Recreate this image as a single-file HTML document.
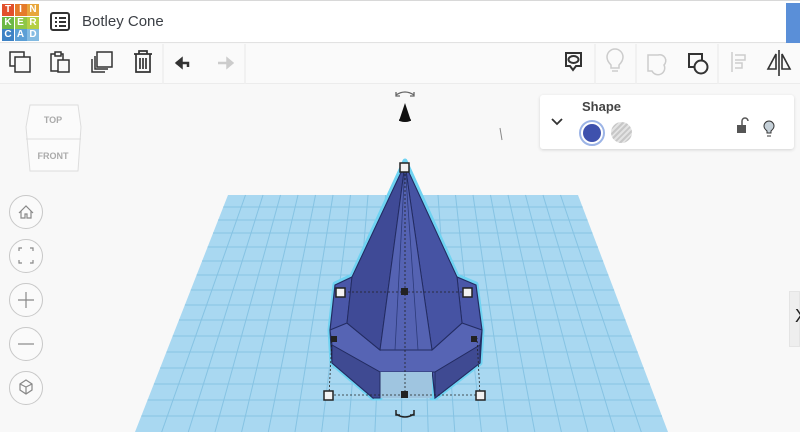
<!DOCTYPE html>
<html><head><meta charset="utf-8"><style>
*{margin:0;padding:0;box-sizing:border-box}
body{width:800px;height:432px;overflow:hidden;background:#f8f8f8;font-family:"Liberation Sans",sans-serif;position:relative}
.hdr{position:absolute;left:0;top:0;width:800px;height:43px;background:#fff;border-bottom:1px solid #e2e2e2;border-top:1px solid #d8d8d8}
.tb{position:absolute;left:0;top:44px;width:800px;height:40px;background:#fafafa;border-bottom:1px solid #ececec}
.logo{position:absolute;left:2px;top:3px;width:37px;height:37px;display:grid;grid-template-columns:repeat(3,12px);grid-gap:0.5px}
.logo span{color:#fff;font-size:10px;font-weight:bold;text-align:center;line-height:12px}
.title{position:absolute;left:82px;top:12px;font-size:15px;color:#3b3f45}
.panel{position:absolute;left:540px;top:95px;width:254px;height:54px;background:#fff;border-radius:3px;box-shadow:0 1px 3px rgba(0,0,0,.15)}
.circ{position:absolute;left:9px;width:34px;height:34px;border:1px solid #c8c8c8;border-radius:50%;background:#fafafa}
</style></head><body>
<div class="hdr">
<div class="logo">
<span style="background:#e2502b">T</span><span style="background:#e57b2a">I</span><span style="background:#e8a63b">N</span>
<span style="background:#6cb845">K</span><span style="background:#8fc746">E</span><span style="background:#b5cf45">R</span>
<span style="background:#3d82c5">C</span><span style="background:#5b9fd6">A</span><span style="background:#83bbe2">D</span>
</div>
<svg style="position:absolute;left:50px;top:11px" width="20" height="20" viewBox="0 0 20 20"><rect x="1" y="1" width="18" height="17" rx="2" fill="none" stroke="#333" stroke-width="2"/><path d="M5 6h2M9 6h7M5 10h2M9 10h7M5 14h2M9 14h7" stroke="#333" stroke-width="2"/></svg>
<div class="title">Botley Cone</div>
<div style="position:absolute;left:786px;top:2px;width:14px;height:40px;background:#5a8fd8"></div>
</div>
<div class="tb">
<svg width="800" height="40" style="position:absolute;left:0;top:0" fill="none" stroke="#333" stroke-width="1.5">
<rect x="10" y="8" width="14" height="14"/><rect x="15" y="13" width="15" height="15" fill="#fafafa"/>
<rect x="51" y="10" width="12" height="17"/><rect x="55" y="8" width="6" height="4" fill="#fafafa"/><rect x="58" y="16" width="11" height="12" fill="#fafafa"/>
<rect x="97" y="8" width="15" height="15"/><path d="M95 12v13h13M92 15v13h13"/>
<path d="M134 10h18M139 10v-3h8v3M136 10v18h14V10M140 14v11M143 14v11M146 14v11" stroke-width="1.7"/>
<path d="M176 19h12v4" stroke-width="2.5"/><path d="M176 19l6-5v10z" fill="#333"/>
<path d="M230 19h-12" stroke="#ccc" stroke-width="2.5"/><path d="M233 19l-6-5v10z" fill="#ccc" stroke="#ccc"/>
<line x1="163" y1="0" x2="163" y2="40" stroke="#eee"/><line x1="245" y1="0" x2="245" y2="40" stroke="#eee"/>
<path d="M566 9h15v13h-5l-3 4-3-4h-4z" stroke-width="2"/><ellipse cx="573.5" cy="15.5" rx="5" ry="3.5" stroke-width="2"/>
<path d="M611 21c-3-3-4-5-4-8a8 8 0 0 1 16 0c0 3-1 5-4 8v3h-8z M612 27h6" stroke="#ccc"/>
<path d="M648 11h10a6 6 0 0 1 6 10 6 6 0 0 1-12 6h-4z" stroke="#ccc"/>
<rect x="689" y="10" width="13" height="13" stroke-width="2"/><circle cx="701" cy="23" r="6.5" fill="#fafafa" stroke-width="2"/>
<path d="M732 8v20M735 11h10v5h-10M735 19h7v5h-7" stroke="#ccc"/>
<path d="M779 6v26M776 10l-8 15h8zM782 10l8 15h-8z" stroke-width="1.6"/>
<line x1="595" y1="0" x2="595" y2="40" stroke="#eee"/><line x1="636" y1="0" x2="636" y2="40" stroke="#eee"/><line x1="718" y1="0" x2="718" y2="40" stroke="#eee"/>
</svg>
</div>
<svg style="position:absolute;left:24px;top:103px" width="60" height="70"><path d="M6 2h48l3 22-3 44H6L2 24z" fill="#fbfbfb" stroke="#ddd"/><path d="M2 36h55" stroke="#ddd"/><text x="29" y="20" font-size="9" font-weight="bold" fill="#aaa" text-anchor="middle" font-family="Liberation Sans">TOP</text><text x="29" y="56" font-size="9" font-weight="bold" fill="#aaa" text-anchor="middle" font-family="Liberation Sans">FRONT</text></svg>
<div class="circ" style="top:195px"></div><div class="circ" style="top:239px"></div><div class="circ" style="top:283px"></div><div class="circ" style="top:327px"></div><div class="circ" style="top:371px"></div>
<svg style="position:absolute;left:0;top:0" width="60" height="432" fill="none" stroke="#888" stroke-width="1.2">
<path d="M19 213l7-7 7 7M21 211v7h4v-4h2v4h4v-7"/>
<path d="M19 251v-3h3M33 251v-3h-3M19 260v3h3M33 260v3h-3"/>
<path d="M26 292v16M18 300h16"/><path d="M18 344h16"/>
<path d="M26 380l6 4v6l-6 4-6-4v-6zM20 384l6 3 6-3M26 387v7"/>
</svg>
<svg style="position:absolute;left:0;top:0" width="800" height="432">
<polygon points="228,195 578,195 668,432 135,432" fill="#a9d8f1"/>
<g stroke="#86c3e3" stroke-width="1">
<line x1="245.5" y1="195" x2="161.7" y2="432"/><line x1="263" y1="195" x2="188.3" y2="432"/><line x1="280.5" y1="195" x2="215" y2="432"/><line x1="298" y1="195" x2="241.6" y2="432"/><line x1="315.5" y1="195" x2="268.3" y2="432"/><line x1="333" y1="195" x2="295" y2="432"/><line x1="350.5" y1="195" x2="321.6" y2="432"/><line x1="368" y1="195" x2="348.2" y2="432"/><line x1="385.5" y1="195" x2="374.9" y2="432"/><line x1="403" y1="195" x2="401.5" y2="432"/><line x1="420.5" y1="195" x2="428.2" y2="432"/><line x1="438" y1="195" x2="454.8" y2="432"/><line x1="455.5" y1="195" x2="481.5" y2="432"/><line x1="473" y1="195" x2="508" y2="432"/><line x1="490.5" y1="195" x2="534.8" y2="432"/><line x1="508" y1="195" x2="561.4" y2="432"/><line x1="525.5" y1="195" x2="588" y2="432"/><line x1="543" y1="195" x2="614.7" y2="432"/><line x1="560.5" y1="195" x2="641.3" y2="432"/>
<line x1="223.3" y1="207" x2="582.6" y2="207"/><line x1="218.2" y1="220" x2="587.5" y2="220"/><line x1="213.1" y1="233" x2="592.4" y2="233"/><line x1="207.6" y1="247" x2="597.8" y2="247"/><line x1="202.1" y1="261" x2="603.1" y2="261"/><line x1="196.6" y1="275" x2="608.4" y2="275"/><line x1="190.8" y1="290" x2="614.1" y2="290"/><line x1="184.9" y1="305" x2="619.8" y2="305"/><line x1="179" y1="320" x2="625.5" y2="320"/><line x1="172.7" y1="336" x2="631.6" y2="336"/><line x1="166.5" y1="352" x2="637.7" y2="352"/><line x1="160.2" y1="368" x2="643.7" y2="368"/><line x1="153.9" y1="384" x2="649.8" y2="384"/><line x1="147.6" y1="400" x2="655.9" y2="400"/><line x1="141.4" y1="416" x2="662" y2="416"/>
</g>
<path d="M405 161L352 276L335 284L330 330L332 363L373 398L380 398L380 370L432 370L432 398L435 398L480 363L482 330L476 284L457 276Z" fill="#4fc3ea" stroke="#6fd3f2" stroke-width="5" stroke-linejoin="round"/>
<path d="M335 285L352 277L457 277L476 285L482 330L480 363L435 398L432 370L380 370L373 398L332 363L330 330Z" fill="#4a57a8" stroke="#232c62" stroke-width="1.2"/>
<path d="M330 330L347 323L380 350L432 350L462 323L482 330L480 345L435 372L380 372L332 345Z" fill="#5664b4" stroke="#232c62"/>
<path d="M332 345L380 372L380 398L373 398L332 363Z" fill="#3f4a92" stroke="#232c62"/>
<path d="M480 345L435 372L435 398L480 363Z" fill="#3f4a92" stroke="#232c62"/>
<rect x="380.5" y="372" width="51.5" height="26" fill="#9fc5e0"/>
<path d="M405 164L352 277L347 323L380 350L432 350L462 323L457 277Z" fill="#4b58aa" stroke="#232c62"/>
<path d="M405 164L352 277L347 323L380 350Z" fill="#3f4a96" stroke="#232c62"/>
<path d="M405 164L432 350L462 323L457 277Z" fill="#4653a3" stroke="#232c62"/>
<path d="M405 164L380 350L432 350Z" fill="#5563b3" stroke="#232c62"/>
<path d="M405 164L395 350M405 164L418 350" stroke="#2c3a7a" stroke-width=".8"/>
<path d="M405 170v225M340 292h127M330 395h150M329 395l3-57M480 395l-3-57" stroke="#222" stroke-width=".8" stroke-dasharray="2 2" fill="none"/>
<g fill="#f2f2f2" stroke="#222" stroke-width="1.5"><rect x="400" y="163" width="9" height="9"/><rect x="336" y="288" width="9" height="9"/><rect x="463" y="288" width="9" height="9"/><rect x="324" y="391" width="9" height="9"/><rect x="476" y="391" width="9" height="9"/></g>
<g fill="#222"><rect x="401" y="288" width="7" height="7"/><rect x="331" y="336" width="6" height="6"/><rect x="471" y="336" width="6" height="6"/><rect x="401" y="391" width="7" height="7"/></g>
<path d="M396 414q9 6 18 0M396 410v5h4M414 410v5h-4" fill="none" stroke="#222" stroke-width="1.5"/>
<path d="M405 103l-6 18h12z" fill="#111"/><ellipse cx="405" cy="120" rx="6" ry="2" fill="#111"/>
<path d="M396 95q9-6 18 0M396 92v4h4M414 92v4h-4" fill="none" stroke="#666" stroke-width="1.3"/>
<path d="M500 128l2 12" stroke="#888"/>
</svg>
<div class="panel">
<svg style="position:absolute;left:10px;top:22px" width="14" height="10"><path d="M2 2l5 5 5-5" fill="none" stroke="#333" stroke-width="1.8"/></svg>
<div style="position:absolute;left:42px;top:4px;font-size:13px;color:#444;font-weight:bold">Shape</div>
<div style="position:absolute;left:39px;top:25px;width:26px;height:26px;border-radius:50%;border:2px solid #9cb4e6;padding:2px"><div style="width:100%;height:100%;border-radius:50%;background:#3e51ad"></div></div>
<div style="position:absolute;left:71px;top:27px;width:21px;height:21px;border-radius:50%;background:repeating-linear-gradient(135deg,#c7c7c7 0 2px,#e3e3e3 2px 4px)"></div>
<svg style="position:absolute;left:195px;top:22px" width="50" height="22"><rect x="2" y="8" width="9" height="8" fill="#555"/><path d="M7 8V4a3 3 0 0 1 6 0" fill="none" stroke="#555" stroke-width="1.5"/><path d="M32 14c-2-2-3-3-3-5a5 5 0 0 1 10 0c0 2-1 3-3 5v2h-4z" fill="#c5d0d8" stroke="#333"/><path d="M32 19h4" stroke="#333"/></svg>
</div>
<div style="position:absolute;left:789px;top:291px;width:11px;height:56px;background:#eee;border:1px solid #e4e4e4"><span style="position:absolute;left:5px;top:14px;font-size:18px;color:#222">X</span></div>
</body></html>
